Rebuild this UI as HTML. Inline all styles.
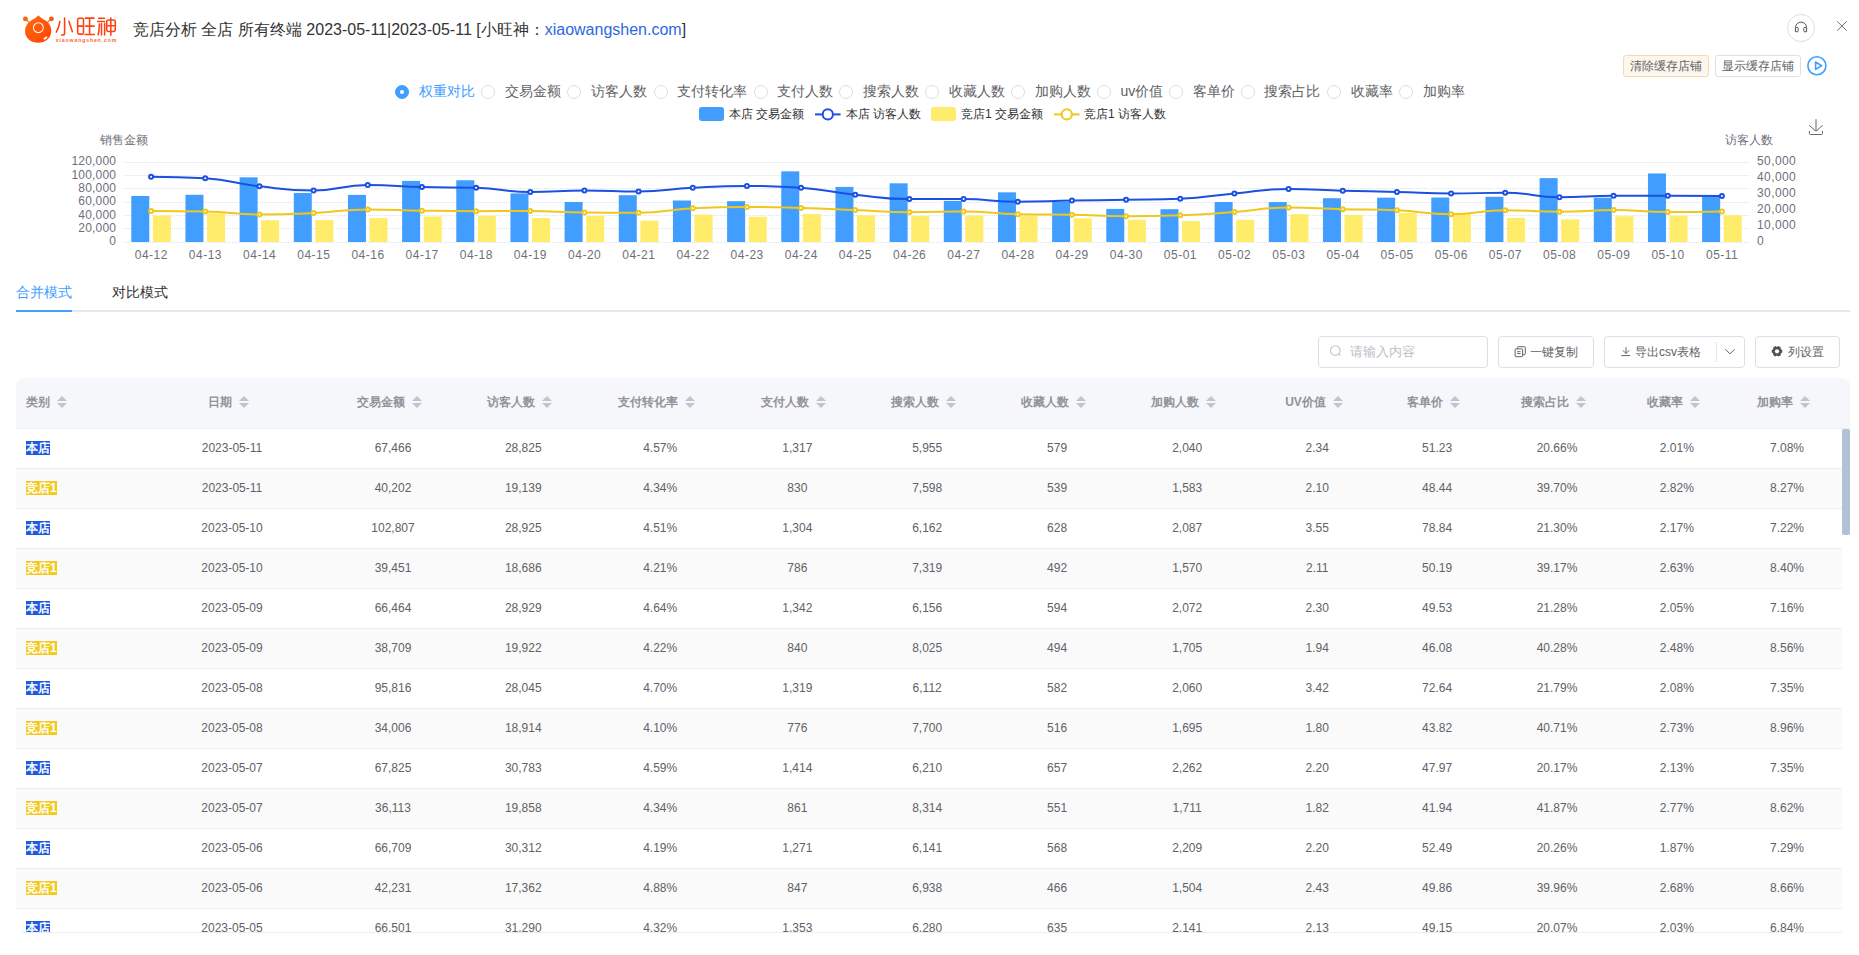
<!DOCTYPE html>
<html><head><meta charset="utf-8">
<style>
*{box-sizing:border-box;margin:0;padding:0}
html,body{width:1859px;height:955px;overflow:hidden;background:#fff}
body{position:relative;font-family:"Liberation Sans",sans-serif;color:#606266}
.abs{position:absolute}
/* header */
.title{position:absolute;left:133px;top:19px;font-size:16px;line-height:22px;color:#333;white-space:nowrap}
.title a{color:#2d68e3;text-decoration:none}
.logo{position:absolute;left:20px;top:12px;width:100px;height:34px}
.btn-s{position:absolute;top:55px;height:22px;font-size:12px;line-height:20px;border:1px solid #dcdfe6;border-radius:3px;background:#fff;color:#606266;text-align:center;white-space:nowrap}
.btn-s.warn{background:#fdf6ec;border-color:#f5dab1}
/* radios */
.rd{position:absolute;top:84px;height:16px;white-space:nowrap;font-size:14px;line-height:16px;color:#606266}
.rd i{position:absolute;left:0;top:1px;width:14px;height:14px;border:1px solid #dcdfe6;border-radius:50%;background:#fff}
.rd.on i{border-color:#409eff;background:#409eff}
.rd.on i:after{content:"";position:absolute;left:4px;top:4px;width:4px;height:4px;border-radius:50%;background:#fff}
.rd span{position:absolute;left:23.5px;top:-1.5px}
.rd.on span{color:#409eff}
/* legend */
.lg{position:absolute;top:106px;font-size:12px;line-height:16px;color:#333;white-space:nowrap}
/* axis */
.yl{position:absolute;left:36px;width:80px;text-align:right;font-size:12px;line-height:14px;color:#6e7079;letter-spacing:0.2px;margin-left:0.2px}
.yr{position:absolute;left:1757px;font-size:12px;line-height:14px;color:#6e7079;letter-spacing:0.4px}
.xl{position:absolute;top:248px;width:60px;text-align:center;font-size:12px;line-height:14px;color:#6e7079;letter-spacing:0.5px;text-indent:0.5px}
.axt{position:absolute;top:133px;font-size:12px;line-height:14px;color:#6e7079}
/* tabs */
.tab{position:absolute;top:283px;font-size:14px;line-height:18px;color:#303133}
.tab.on{color:#409eff}
/* toolbar */
.tb{position:absolute;top:336px;height:32px;border:1px solid #dcdfe6;border-radius:4px;background:#fff;font-size:12px;line-height:30px;color:#606266;white-space:nowrap}
/* table */
.thead{position:absolute;left:16px;top:378px;width:1834px;height:51px;background:#f5f7fa;border-radius:8px 8px 0 0;border-bottom:1px solid #ebeef5}
.th{position:absolute;top:394px;font-size:12px;line-height:16px;font-weight:bold;color:#909399;white-space:nowrap}
.caret{position:absolute;right:0;top:2px;width:24px;height:12px}
.caret:before{content:"";position:absolute;left:7px;top:0;border:5px solid transparent;border-top-width:0;border-bottom:5px solid #c0c4cc}
.caret:after{content:"";position:absolute;left:7px;top:7px;border:5px solid transparent;border-bottom-width:0;border-top:5px solid #c0c4cc}
.th{padding-right:24px}
.tr{position:absolute;left:16px;width:1826px;height:40px;background:#fff;border-bottom:1px solid #ebeef5}
.tr.even{background:#fafafa}
.td0{position:absolute;left:10px;top:12px;font-size:12px;line-height:14px}
.td{position:absolute;top:12px;width:120px;margin-left:-16px;text-align:center;font-size:12px;line-height:14px;color:#606266}
.tag{color:#fff;padding:0;font-weight:bold}
.tag.b{background:#1f5bde}
.tag.y{background:#f3c923}
</style></head>
<body>
<!-- logo -->
<svg class="abs" style="left:0;top:0" width="130" height="50" viewBox="0 0 130 50">
  <defs><linearGradient id="lg1" x1="0" y1="0" x2="1" y2="1"><stop offset="0" stop-color="#ff6a12"/><stop offset="1" stop-color="#ff4500"/></linearGradient></defs>
  <path d="M25.4 18.9 L29.8 22.8 M51.4 18.9 L47 22.8" stroke="#ff5d0c" stroke-width="1.1"/>
  <circle cx="25.4" cy="18.9" r="2.45" fill="#ff650f"/>
  <circle cx="51.4" cy="18.9" r="2.45" fill="#ff5a0a"/>
  <path d="M38.4 15.3 C40.5 18 43 19 45.5 20.5 C49.5 23 51.3 27 51.3 31 C51.3 37.8 45.5 42.8 38.2 42.8 C30.8 42.8 25 37.8 25 31.2 C25 27 27 23.2 30.8 20.8 C33.5 19 36.2 18.2 38.4 15.3 Z" fill="url(#lg1)"/>
  <circle cx="38.4" cy="27.7" r="4.9" fill="none" stroke="#fff" stroke-width="1.05"/>
  <ellipse cx="45.5" cy="38.1" rx="2.2" ry="1.05" transform="rotate(-33 45.3 38.2)" fill="#fff"/>
  <g fill="none" stroke="#ff4010" stroke-width="1.55" stroke-linecap="round" stroke-linejoin="round">
    <path d="M64.6 17.9 V33.2 Q64.6 35 62.8 35 H61.5"/>
    <path d="M59.9 21.6 Q58.8 28 56.3 32.2"/>
    <path d="M68.9 21.2 L72.4 31.7"/>
    <rect x="77.7" y="18.3" width="5.8" height="15.8" rx="1.3"/>
    <path d="M77.7 26.1 H83.5"/>
    <path d="M85.2 18.1 H94 M85.6 26.1 H94.1 M85 34.5 H94.3 M89.6 18.1 V34.5"/>
    <path d="M98.6 18.3 H104.5 M97.6 21.5 H104.6 M99.4 24 Q99.2 31 98.2 34.8 M101.5 23.6 V35 M104.6 23.6 V35"/>
    <rect x="106.7" y="20" width="8.6" height="11.5" rx="2"/>
    <path d="M106.7 25.8 H115.3 M110.8 17.9 V35.3"/>
  </g>
  <text x="55.8" y="42.2" font-size="5.2" font-weight="bold" fill="#ff5a2a" font-family="Liberation Sans" letter-spacing="0.84" opacity="0.95">xiaowangshen.com</text>
</svg>
<div class="title">竞店分析 全店 所有终端 2023-05-11|2023-05-11 [小旺神：<a>xiaowangshen.com</a>]</div>
<!-- headset + close -->
<svg class="abs" style="left:1786px;top:13px" width="30" height="30" viewBox="0 0 30 30">
  <circle cx="15" cy="15" r="13.5" fill="#fff" stroke="#dcdfe6" stroke-width="1"/>
  <path d="M9.4 19 V14.7 A5.6 5.6 0 0 1 20.6 14.7 V19" fill="none" stroke="#4a4a4a" stroke-width="0.9"/>
  <rect x="9.6" y="14.3" width="2.6" height="4.6" rx="1.2" fill="#fff" stroke="#4a4a4a" stroke-width="0.9"/>
  <rect x="17.8" y="14.3" width="2.6" height="4.6" rx="1.2" fill="#fff" stroke="#4a4a4a" stroke-width="0.9"/>
</svg>
<svg class="abs" style="left:1836px;top:20px" width="12" height="12" viewBox="0 0 12 12">
  <path d="M1.1 1.3 L10.8 10.7 M10.8 1.3 L1.1 10.7" stroke="#6a6a6a" stroke-width="0.95"/>
</svg>
<div class="btn-s warn" style="left:1623px;width:86px">清除缓存店铺</div>
<div class="btn-s" style="left:1715px;width:86px">显示缓存店铺</div>
<svg class="abs" style="left:1806px;top:55px" width="22" height="22" viewBox="0 0 22 22">
  <circle cx="10.9" cy="10.7" r="9" fill="none" stroke="#409eff" stroke-width="1.6"/>
  <path d="M9.6 7 L15.6 10.7 L9.6 14.4 Z" fill="none" stroke="#409eff" stroke-width="1.6" stroke-linejoin="round"/>
</svg>
<!-- radios -->
<div class="rd on" style="left:395.0px"><i></i><span>权重对比</span></div>
<div class="rd" style="left:481.0px"><i></i><span>交易金额</span></div>
<div class="rd" style="left:567.0px"><i></i><span>访客人数</span></div>
<div class="rd" style="left:653.5px"><i></i><span>支付转化率</span></div>
<div class="rd" style="left:753.5px"><i></i><span>支付人数</span></div>
<div class="rd" style="left:839.3px"><i></i><span>搜索人数</span></div>
<div class="rd" style="left:925.4px"><i></i><span>收藏人数</span></div>
<div class="rd" style="left:1011.0px"><i></i><span>加购人数</span></div>
<div class="rd" style="left:1097.0px"><i></i><span>uv价值</span></div>
<div class="rd" style="left:1169.4px"><i></i><span>客单价</span></div>
<div class="rd" style="left:1240.8px"><i></i><span>搜索占比</span></div>
<div class="rd" style="left:1327.2px"><i></i><span>收藏率</span></div>
<div class="rd" style="left:1399.0px"><i></i><span>加购率</span></div>
<!-- legend -->
<div class="abs" style="left:699px;top:107px;width:25px;height:14px;border-radius:3px;background:#419efe"></div>
<div class="lg" style="left:729px">本店 交易金额</div>
<svg class="abs" style="left:815px;top:107px" width="27" height="15" viewBox="0 0 27 15">
  <path d="M0 7.4 H25.6" stroke="#1c50df" stroke-width="2"/><circle cx="12.8" cy="7.4" r="5.1" fill="#fff" stroke="#1c50df" stroke-width="2"/>
</svg>
<div class="lg" style="left:846px">本店 访客人数</div>
<div class="abs" style="left:931px;top:107px;width:25px;height:14px;border-radius:3px;background:#ffec6a"></div>
<div class="lg" style="left:961px">竞店1 交易金额</div>
<svg class="abs" style="left:1054px;top:107px" width="27" height="15" viewBox="0 0 27 15">
  <path d="M0 7.4 H25.6" stroke="#f0c81c" stroke-width="2"/><circle cx="12.8" cy="7.4" r="5.1" fill="#fff" stroke="#f0c81c" stroke-width="2"/>
</svg>
<div class="lg" style="left:1084px">竞店1 访客人数</div>
<!-- axis titles -->
<div class="axt" style="left:100px">销售金额</div>
<div class="axt" style="left:1725px">访客人数</div>
<svg class="abs" style="left:1807px;top:118px" width="18" height="18" viewBox="0 0 18 18">
  <path d="M9 1.2 V13 M2.3 7.4 L9 13.2 L15.6 7.4 M2.4 12.9 V15.5 Q2.4 16.5 3.4 16.5 H14.6 Q15.5 16.5 15.5 15.5 V12.9" fill="none" stroke="#666" stroke-width="1"/>
</svg>
<svg width="1859" height="955" style="position:absolute;left:0;top:0">
<line x1="124.0" y1="242.5" x2="1749.0" y2="242.5" stroke="#dde3ee" stroke-width="1" stroke-dasharray="1 1"/>
<line x1="124.0" y1="228.5" x2="1749.0" y2="228.5" stroke="#dde3ee" stroke-width="1" stroke-dasharray="1 1"/>
<line x1="124.0" y1="215.5" x2="1749.0" y2="215.5" stroke="#dde3ee" stroke-width="1" stroke-dasharray="1 1"/>
<line x1="124.0" y1="202.5" x2="1749.0" y2="202.5" stroke="#dde3ee" stroke-width="1" stroke-dasharray="1 1"/>
<line x1="124.0" y1="188.5" x2="1749.0" y2="188.5" stroke="#dde3ee" stroke-width="1" stroke-dasharray="1 1"/>
<line x1="124.0" y1="175.5" x2="1749.0" y2="175.5" stroke="#dde3ee" stroke-width="1" stroke-dasharray="1 1"/>
<line x1="124.0" y1="162.5" x2="1749.0" y2="162.5" stroke="#dde3ee" stroke-width="1" stroke-dasharray="1 1"/>
<rect x="131.28" y="196.00" width="18" height="46.00" fill="#419efe"/>
<rect x="152.88" y="215.50" width="18" height="26.50" fill="#ffec6a"/>
<rect x="185.45" y="194.80" width="18" height="47.20" fill="#419efe"/>
<rect x="207.05" y="213.40" width="18" height="28.60" fill="#ffec6a"/>
<rect x="239.62" y="177.33" width="18" height="64.67" fill="#419efe"/>
<rect x="261.22" y="220.20" width="18" height="21.80" fill="#ffec6a"/>
<rect x="293.78" y="193.00" width="18" height="49.00" fill="#419efe"/>
<rect x="315.38" y="220.07" width="18" height="21.93" fill="#ffec6a"/>
<rect x="347.95" y="194.90" width="18" height="47.10" fill="#419efe"/>
<rect x="369.55" y="218.10" width="18" height="23.90" fill="#ffec6a"/>
<rect x="402.12" y="180.90" width="18" height="61.10" fill="#419efe"/>
<rect x="423.72" y="216.50" width="18" height="25.50" fill="#ffec6a"/>
<rect x="456.28" y="180.27" width="18" height="61.73" fill="#419efe"/>
<rect x="477.88" y="215.73" width="18" height="26.27" fill="#ffec6a"/>
<rect x="510.45" y="193.40" width="18" height="48.60" fill="#419efe"/>
<rect x="532.05" y="218.00" width="18" height="24.00" fill="#ffec6a"/>
<rect x="564.62" y="202.00" width="18" height="40.00" fill="#419efe"/>
<rect x="586.22" y="216.00" width="18" height="26.00" fill="#ffec6a"/>
<rect x="618.78" y="195.20" width="18" height="46.80" fill="#419efe"/>
<rect x="640.38" y="220.67" width="18" height="21.33" fill="#ffec6a"/>
<rect x="672.95" y="200.50" width="18" height="41.50" fill="#419efe"/>
<rect x="694.55" y="214.50" width="18" height="27.50" fill="#ffec6a"/>
<rect x="727.12" y="201.20" width="18" height="40.80" fill="#419efe"/>
<rect x="748.72" y="216.80" width="18" height="25.20" fill="#ffec6a"/>
<rect x="781.28" y="171.33" width="18" height="70.67" fill="#419efe"/>
<rect x="802.88" y="214.00" width="18" height="28.00" fill="#ffec6a"/>
<rect x="835.45" y="186.90" width="18" height="55.10" fill="#419efe"/>
<rect x="857.05" y="215.27" width="18" height="26.73" fill="#ffec6a"/>
<rect x="889.62" y="183.30" width="18" height="58.70" fill="#419efe"/>
<rect x="911.22" y="216.00" width="18" height="26.00" fill="#ffec6a"/>
<rect x="943.78" y="200.90" width="18" height="41.10" fill="#419efe"/>
<rect x="965.38" y="215.53" width="18" height="26.47" fill="#ffec6a"/>
<rect x="997.95" y="192.33" width="18" height="49.67" fill="#419efe"/>
<rect x="1019.55" y="215.70" width="18" height="26.30" fill="#ffec6a"/>
<rect x="1052.12" y="201.70" width="18" height="40.30" fill="#419efe"/>
<rect x="1073.72" y="218.27" width="18" height="23.73" fill="#ffec6a"/>
<rect x="1106.28" y="208.90" width="18" height="33.10" fill="#419efe"/>
<rect x="1127.88" y="219.80" width="18" height="22.20" fill="#ffec6a"/>
<rect x="1160.45" y="209.20" width="18" height="32.80" fill="#419efe"/>
<rect x="1182.05" y="221.00" width="18" height="21.00" fill="#ffec6a"/>
<rect x="1214.62" y="202.00" width="18" height="40.00" fill="#419efe"/>
<rect x="1236.22" y="219.80" width="18" height="22.20" fill="#ffec6a"/>
<rect x="1268.78" y="202.10" width="18" height="39.90" fill="#419efe"/>
<rect x="1290.38" y="214.20" width="18" height="27.80" fill="#ffec6a"/>
<rect x="1322.95" y="198.20" width="18" height="43.80" fill="#419efe"/>
<rect x="1344.55" y="214.80" width="18" height="27.20" fill="#ffec6a"/>
<rect x="1377.12" y="197.67" width="18" height="44.33" fill="#419efe"/>
<rect x="1398.72" y="213.00" width="18" height="29.00" fill="#ffec6a"/>
<rect x="1431.28" y="197.53" width="18" height="44.47" fill="#419efe"/>
<rect x="1452.88" y="213.85" width="18" height="28.15" fill="#ffec6a"/>
<rect x="1485.45" y="196.78" width="18" height="45.22" fill="#419efe"/>
<rect x="1507.05" y="217.92" width="18" height="24.08" fill="#ffec6a"/>
<rect x="1539.62" y="178.12" width="18" height="63.88" fill="#419efe"/>
<rect x="1561.22" y="219.33" width="18" height="22.67" fill="#ffec6a"/>
<rect x="1593.78" y="197.69" width="18" height="44.31" fill="#419efe"/>
<rect x="1615.38" y="216.19" width="18" height="25.81" fill="#ffec6a"/>
<rect x="1647.95" y="173.46" width="18" height="68.54" fill="#419efe"/>
<rect x="1669.55" y="215.70" width="18" height="26.30" fill="#ffec6a"/>
<rect x="1702.12" y="197.02" width="18" height="44.98" fill="#419efe"/>
<rect x="1723.72" y="215.20" width="18" height="26.80" fill="#ffec6a"/>
<path d="M151.08 210.96 C151.08 210.96 178.19 210.96 205.25 211.44 C232.35 211.92 232.32 214.48 259.42 214.48 C286.48 214.48 286.52 214.28 313.58 213.04 C340.69 211.80 340.64 209.52 367.75 209.52 C394.81 209.52 394.83 210.28 421.92 210.70 C449.00 211.12 449.00 211.20 476.08 211.20 C503.17 211.20 503.17 210.96 530.25 210.96 C557.34 210.96 557.33 212.27 584.42 212.50 C611.49 212.72 611.55 212.72 638.58 212.72 C665.71 212.72 665.62 209.48 692.75 208.24 C719.79 207.01 719.83 207.01 746.92 207.01 C774.00 207.01 774.01 207.25 801.08 208.00 C828.17 208.75 828.17 208.94 855.25 210.00 C882.34 211.06 882.32 212.24 909.42 212.24 C936.49 212.24 936.52 211.50 963.58 211.50 C990.68 211.50 990.65 213.52 1017.75 214.16 C1044.82 214.80 1044.84 214.26 1071.92 214.80 C1099.00 215.34 1099.00 216.30 1126.08 216.30 C1153.16 216.30 1153.19 216.30 1180.25 215.28 C1207.36 214.25 1207.35 213.88 1234.42 211.92 C1261.52 209.96 1261.46 207.44 1288.58 207.44 C1315.63 207.44 1315.66 208.48 1342.75 209.20 C1369.83 209.92 1369.87 209.20 1396.92 210.32 C1424.03 211.44 1424.00 214.22 1451.08 214.22 C1478.17 214.22 1478.14 210.23 1505.25 210.23 C1532.30 210.23 1532.33 211.74 1559.42 211.74 C1586.50 211.74 1586.50 210.12 1613.58 210.12 C1640.67 210.12 1640.66 212.10 1667.75 212.10 C1694.83 212.10 1721.92 211.38 1721.92 211.38" fill="none" stroke="#f0c81c" stroke-width="2"/>
<circle cx="151.08" cy="210.96" r="2" fill="#fff" stroke="#f0c81c" stroke-width="2"/>
<circle cx="205.25" cy="211.44" r="2" fill="#fff" stroke="#f0c81c" stroke-width="2"/>
<circle cx="259.42" cy="214.48" r="2" fill="#fff" stroke="#f0c81c" stroke-width="2"/>
<circle cx="313.58" cy="213.04" r="2" fill="#fff" stroke="#f0c81c" stroke-width="2"/>
<circle cx="367.75" cy="209.52" r="2" fill="#fff" stroke="#f0c81c" stroke-width="2"/>
<circle cx="421.92" cy="210.70" r="2" fill="#fff" stroke="#f0c81c" stroke-width="2"/>
<circle cx="476.08" cy="211.20" r="2" fill="#fff" stroke="#f0c81c" stroke-width="2"/>
<circle cx="530.25" cy="210.96" r="2" fill="#fff" stroke="#f0c81c" stroke-width="2"/>
<circle cx="584.42" cy="212.50" r="2" fill="#fff" stroke="#f0c81c" stroke-width="2"/>
<circle cx="638.58" cy="212.72" r="2" fill="#fff" stroke="#f0c81c" stroke-width="2"/>
<circle cx="692.75" cy="208.24" r="2" fill="#fff" stroke="#f0c81c" stroke-width="2"/>
<circle cx="746.92" cy="207.01" r="2" fill="#fff" stroke="#f0c81c" stroke-width="2"/>
<circle cx="801.08" cy="208.00" r="2" fill="#fff" stroke="#f0c81c" stroke-width="2"/>
<circle cx="855.25" cy="210.00" r="2" fill="#fff" stroke="#f0c81c" stroke-width="2"/>
<circle cx="909.42" cy="212.24" r="2" fill="#fff" stroke="#f0c81c" stroke-width="2"/>
<circle cx="963.58" cy="211.50" r="2" fill="#fff" stroke="#f0c81c" stroke-width="2"/>
<circle cx="1017.75" cy="214.16" r="2" fill="#fff" stroke="#f0c81c" stroke-width="2"/>
<circle cx="1071.92" cy="214.80" r="2" fill="#fff" stroke="#f0c81c" stroke-width="2"/>
<circle cx="1126.08" cy="216.30" r="2" fill="#fff" stroke="#f0c81c" stroke-width="2"/>
<circle cx="1180.25" cy="215.28" r="2" fill="#fff" stroke="#f0c81c" stroke-width="2"/>
<circle cx="1234.42" cy="211.92" r="2" fill="#fff" stroke="#f0c81c" stroke-width="2"/>
<circle cx="1288.58" cy="207.44" r="2" fill="#fff" stroke="#f0c81c" stroke-width="2"/>
<circle cx="1342.75" cy="209.20" r="2" fill="#fff" stroke="#f0c81c" stroke-width="2"/>
<circle cx="1396.92" cy="210.32" r="2" fill="#fff" stroke="#f0c81c" stroke-width="2"/>
<circle cx="1451.08" cy="214.22" r="2" fill="#fff" stroke="#f0c81c" stroke-width="2"/>
<circle cx="1505.25" cy="210.23" r="2" fill="#fff" stroke="#f0c81c" stroke-width="2"/>
<circle cx="1559.42" cy="211.74" r="2" fill="#fff" stroke="#f0c81c" stroke-width="2"/>
<circle cx="1613.58" cy="210.12" r="2" fill="#fff" stroke="#f0c81c" stroke-width="2"/>
<circle cx="1667.75" cy="212.10" r="2" fill="#fff" stroke="#f0c81c" stroke-width="2"/>
<circle cx="1721.92" cy="211.38" r="2" fill="#fff" stroke="#f0c81c" stroke-width="2"/>
<path d="M151.08 176.80 C151.08 176.80 178.31 176.80 205.25 178.32 C232.47 179.86 232.23 183.27 259.42 186.32 C286.39 189.35 286.53 190.48 313.58 190.48 C340.69 190.48 340.61 185.10 367.75 185.10 C394.78 185.10 394.83 186.44 421.92 187.12 C448.99 187.80 449.04 187.12 476.08 187.81 C503.20 188.50 503.13 191.92 530.25 191.92 C557.30 191.92 557.33 190.40 584.42 190.40 C611.50 190.40 611.53 191.50 638.58 191.50 C665.70 191.50 665.64 189.10 692.75 187.70 C719.81 186.30 719.83 185.90 746.92 185.90 C774.00 185.90 774.10 185.90 801.08 187.81 C828.27 189.73 828.11 191.81 855.25 194.64 C882.27 197.46 882.29 199.12 909.42 199.12 C936.45 199.12 936.52 199.12 963.58 199.12 C990.68 199.12 990.65 201.68 1017.75 201.68 C1044.82 201.68 1044.83 201.10 1071.92 200.61 C1099.00 200.11 1099.00 200.17 1126.08 199.70 C1153.17 199.22 1153.23 199.70 1180.25 198.70 C1207.40 197.71 1207.32 195.87 1234.42 193.41 C1261.48 190.95 1261.46 188.88 1288.58 188.88 C1315.63 188.88 1315.66 189.92 1342.75 190.69 C1369.83 191.45 1369.84 191.23 1396.92 191.94 C1424.00 192.64 1424.00 193.50 1451.08 193.50 C1478.16 193.50 1478.21 192.75 1505.25 192.75 C1532.38 192.75 1532.29 197.13 1559.42 197.13 C1586.46 197.13 1586.50 195.71 1613.58 195.71 C1640.66 195.71 1640.67 195.71 1667.75 195.72 C1694.83 195.73 1721.92 195.88 1721.92 195.88" fill="none" stroke="#1c50df" stroke-width="2"/>
<circle cx="151.08" cy="176.80" r="2" fill="#fff" stroke="#1c50df" stroke-width="2"/>
<circle cx="205.25" cy="178.32" r="2" fill="#fff" stroke="#1c50df" stroke-width="2"/>
<circle cx="259.42" cy="186.32" r="2" fill="#fff" stroke="#1c50df" stroke-width="2"/>
<circle cx="313.58" cy="190.48" r="2" fill="#fff" stroke="#1c50df" stroke-width="2"/>
<circle cx="367.75" cy="185.10" r="2" fill="#fff" stroke="#1c50df" stroke-width="2"/>
<circle cx="421.92" cy="187.12" r="2" fill="#fff" stroke="#1c50df" stroke-width="2"/>
<circle cx="476.08" cy="187.81" r="2" fill="#fff" stroke="#1c50df" stroke-width="2"/>
<circle cx="530.25" cy="191.92" r="2" fill="#fff" stroke="#1c50df" stroke-width="2"/>
<circle cx="584.42" cy="190.40" r="2" fill="#fff" stroke="#1c50df" stroke-width="2"/>
<circle cx="638.58" cy="191.50" r="2" fill="#fff" stroke="#1c50df" stroke-width="2"/>
<circle cx="692.75" cy="187.70" r="2" fill="#fff" stroke="#1c50df" stroke-width="2"/>
<circle cx="746.92" cy="185.90" r="2" fill="#fff" stroke="#1c50df" stroke-width="2"/>
<circle cx="801.08" cy="187.81" r="2" fill="#fff" stroke="#1c50df" stroke-width="2"/>
<circle cx="855.25" cy="194.64" r="2" fill="#fff" stroke="#1c50df" stroke-width="2"/>
<circle cx="909.42" cy="199.12" r="2" fill="#fff" stroke="#1c50df" stroke-width="2"/>
<circle cx="963.58" cy="199.12" r="2" fill="#fff" stroke="#1c50df" stroke-width="2"/>
<circle cx="1017.75" cy="201.68" r="2" fill="#fff" stroke="#1c50df" stroke-width="2"/>
<circle cx="1071.92" cy="200.61" r="2" fill="#fff" stroke="#1c50df" stroke-width="2"/>
<circle cx="1126.08" cy="199.70" r="2" fill="#fff" stroke="#1c50df" stroke-width="2"/>
<circle cx="1180.25" cy="198.70" r="2" fill="#fff" stroke="#1c50df" stroke-width="2"/>
<circle cx="1234.42" cy="193.41" r="2" fill="#fff" stroke="#1c50df" stroke-width="2"/>
<circle cx="1288.58" cy="188.88" r="2" fill="#fff" stroke="#1c50df" stroke-width="2"/>
<circle cx="1342.75" cy="190.69" r="2" fill="#fff" stroke="#1c50df" stroke-width="2"/>
<circle cx="1396.92" cy="191.94" r="2" fill="#fff" stroke="#1c50df" stroke-width="2"/>
<circle cx="1451.08" cy="193.50" r="2" fill="#fff" stroke="#1c50df" stroke-width="2"/>
<circle cx="1505.25" cy="192.75" r="2" fill="#fff" stroke="#1c50df" stroke-width="2"/>
<circle cx="1559.42" cy="197.13" r="2" fill="#fff" stroke="#1c50df" stroke-width="2"/>
<circle cx="1613.58" cy="195.71" r="2" fill="#fff" stroke="#1c50df" stroke-width="2"/>
<circle cx="1667.75" cy="195.72" r="2" fill="#fff" stroke="#1c50df" stroke-width="2"/>
<circle cx="1721.92" cy="195.88" r="2" fill="#fff" stroke="#1c50df" stroke-width="2"/>
</svg>
<div class="yl" style="top:234.4px">0</div>
<div class="yl" style="top:221.1px">20,000</div>
<div class="yl" style="top:207.7px">40,000</div>
<div class="yl" style="top:194.4px">60,000</div>
<div class="yl" style="top:181.1px">80,000</div>
<div class="yl" style="top:167.7px">100,000</div>
<div class="yl" style="top:154.4px">120,000</div>
<div class="yr" style="top:234.0px">0</div>
<div class="yr" style="top:218.0px">10,000</div>
<div class="yr" style="top:202.0px">20,000</div>
<div class="yr" style="top:186.0px">30,000</div>
<div class="yr" style="top:170.0px">40,000</div>
<div class="yr" style="top:154.0px">50,000</div>
<div class="xl" style="left:121.1px">04-12</div>
<div class="xl" style="left:175.2px">04-13</div>
<div class="xl" style="left:229.4px">04-14</div>
<div class="xl" style="left:283.6px">04-15</div>
<div class="xl" style="left:337.8px">04-16</div>
<div class="xl" style="left:391.9px">04-17</div>
<div class="xl" style="left:446.1px">04-18</div>
<div class="xl" style="left:500.2px">04-19</div>
<div class="xl" style="left:554.4px">04-20</div>
<div class="xl" style="left:608.6px">04-21</div>
<div class="xl" style="left:662.8px">04-22</div>
<div class="xl" style="left:716.9px">04-23</div>
<div class="xl" style="left:771.1px">04-24</div>
<div class="xl" style="left:825.2px">04-25</div>
<div class="xl" style="left:879.4px">04-26</div>
<div class="xl" style="left:933.6px">04-27</div>
<div class="xl" style="left:987.8px">04-28</div>
<div class="xl" style="left:1041.9px">04-29</div>
<div class="xl" style="left:1096.1px">04-30</div>
<div class="xl" style="left:1150.2px">05-01</div>
<div class="xl" style="left:1204.4px">05-02</div>
<div class="xl" style="left:1258.6px">05-03</div>
<div class="xl" style="left:1312.8px">05-04</div>
<div class="xl" style="left:1366.9px">05-05</div>
<div class="xl" style="left:1421.1px">05-06</div>
<div class="xl" style="left:1475.2px">05-07</div>
<div class="xl" style="left:1529.4px">05-08</div>
<div class="xl" style="left:1583.6px">05-09</div>
<div class="xl" style="left:1637.8px">05-10</div>
<div class="xl" style="left:1691.9px">05-11</div>
<!-- tabs -->
<div class="tab on" style="left:16px">合并模式</div>
<div class="tab" style="left:112px">对比模式</div>
<div class="abs" style="left:16px;top:310px;width:1834px;height:2px;background:#e4e7ed"></div>
<div class="abs" style="left:16px;top:310px;width:56px;height:2px;background:#409eff"></div>
<!-- toolbar -->
<div class="tb" style="left:1318px;width:170px;color:#bcc0c8;font-size:13px;line-height:29px;padding-left:31px">请输入内容
  <svg class="abs" style="left:10px;top:8px" width="14" height="14" viewBox="0 0 14 14"><circle cx="6.3" cy="5.5" r="4.8" fill="none" stroke="#c0c4cc" stroke-width="1.1"/><path d="M9.7 8.9 L11.4 10.6" stroke="#c0c4cc" stroke-width="1.1"/></svg>
</div>
<div class="tb" style="left:1498px;width:96px;padding-left:31px">一键复制
  <svg class="abs" style="left:15px;top:9px" width="13" height="13" viewBox="0 0 13 13"><g fill="none" stroke="#606266" stroke-width="1"><rect x="1.1" y="2.9" width="7.5" height="7.8" rx="0.8"/><path d="M3.4 2.9 V1.6 Q3.4 0.7 4.3 0.7 H10.4 Q11.3 0.7 11.3 1.6 V7.7 Q11.3 8.6 10.4 8.6 H8.6"/><path d="M3.2 5.7 H6.6 M3.2 7.6 H6.6"/></g></svg>
</div>
<div class="tb" style="left:1604px;width:141px;padding-left:30px">导出csv表格
  <svg class="abs" style="left:15px;top:9px" width="12" height="12" viewBox="0 0 12 12"><path d="M6 1.2 V7.4 M2.8 4.3 L6 7.5 L9.2 4.3 M1.3 9.6 H10.2" fill="none" stroke="#606266" stroke-width="1"/></svg>
  <div class="abs" style="left:111px;top:5px;width:1px;height:20px;background:#e4e7ed"></div>
  <svg class="abs" style="left:120px;top:10px" width="11" height="10" viewBox="0 0 11 10"><path d="M0.4 2.2 L5 6.9 L9.6 2.2" fill="none" stroke="#606266" stroke-width="1"/></svg>
</div>
<div class="tb" style="left:1755px;width:85px;padding-left:32px">列设置
  <svg class="abs" style="left:15px;top:9px" width="12" height="12" viewBox="0 0 12 12"><path d="M11.24 3.99 L11.24 6.61 L9.72 7.45 L9.75 9.18 L7.49 10.49 L6.00 9.60 L4.51 10.49 L2.25 9.18 L2.28 7.45 L0.76 6.61 L0.76 3.99 L2.28 3.15 L2.25 1.42 L4.51 0.11 L6.00 1.00 L7.49 0.11 L9.75 1.42 L9.72 3.15 Z" fill="#505050"/><circle cx="6" cy="5.3" r="2.1" fill="#fff"/></svg>
</div>
<!-- table -->
<div class="thead"></div>
<div class="th" style="left:26px">类别<b class="caret"></b></div>
<div class="th" style="left:208.0px">日期<b class="caret"></b></div>
<div class="th" style="left:357.0px">交易金额<b class="caret"></b></div>
<div class="th" style="left:487.3px">访客人数<b class="caret"></b></div>
<div class="th" style="left:618.2px">支付转化率<b class="caret"></b></div>
<div class="th" style="left:761.3px">支付人数<b class="caret"></b></div>
<div class="th" style="left:891.2px">搜索人数<b class="caret"></b></div>
<div class="th" style="left:1021.1px">收藏人数<b class="caret"></b></div>
<div class="th" style="left:1151.2px">加购人数<b class="caret"></b></div>
<div class="th" style="left:1285.2px">UV价值<b class="caret"></b></div>
<div class="th" style="left:1407.1px">客单价<b class="caret"></b></div>
<div class="th" style="left:1521.0px">搜索占比<b class="caret"></b></div>
<div class="th" style="left:1646.8px">收藏率<b class="caret"></b></div>
<div class="th" style="left:1757.0px">加购率<b class="caret"></b></div>
<div class="abs" style="left:0;top:429px;width:1859px;height:503px;overflow:hidden">
<div class="abs" style="left:0;top:-429px;width:1859px;height:1200px">
<div class="tr" style="top:428.5px"><div class="td0"><span class="tag b">本店</span></div><div class="td" style="left:172.0px">2023-05-11</div><div class="td" style="left:333.0px">67,466</div><div class="td" style="left:463.3px">28,825</div><div class="td" style="left:600.2px">4.57%</div><div class="td" style="left:737.3px">1,317</div><div class="td" style="left:867.2px">5,955</div><div class="td" style="left:997.1px">579</div><div class="td" style="left:1127.2px">2,040</div><div class="td" style="left:1257.2px">2.34</div><div class="td" style="left:1377.1px">51.23</div><div class="td" style="left:1497.0px">20.66%</div><div class="td" style="left:1616.8px">2.01%</div><div class="td" style="left:1727.0px">7.08%</div></div>
<div class="tr even" style="top:468.5px"><div class="td0"><span class="tag y">竞店1</span></div><div class="td" style="left:172.0px">2023-05-11</div><div class="td" style="left:333.0px">40,202</div><div class="td" style="left:463.3px">19,139</div><div class="td" style="left:600.2px">4.34%</div><div class="td" style="left:737.3px">830</div><div class="td" style="left:867.2px">7,598</div><div class="td" style="left:997.1px">539</div><div class="td" style="left:1127.2px">1,583</div><div class="td" style="left:1257.2px">2.10</div><div class="td" style="left:1377.1px">48.44</div><div class="td" style="left:1497.0px">39.70%</div><div class="td" style="left:1616.8px">2.82%</div><div class="td" style="left:1727.0px">8.27%</div></div>
<div class="tr" style="top:508.5px"><div class="td0"><span class="tag b">本店</span></div><div class="td" style="left:172.0px">2023-05-10</div><div class="td" style="left:333.0px">102,807</div><div class="td" style="left:463.3px">28,925</div><div class="td" style="left:600.2px">4.51%</div><div class="td" style="left:737.3px">1,304</div><div class="td" style="left:867.2px">6,162</div><div class="td" style="left:997.1px">628</div><div class="td" style="left:1127.2px">2,087</div><div class="td" style="left:1257.2px">3.55</div><div class="td" style="left:1377.1px">78.84</div><div class="td" style="left:1497.0px">21.30%</div><div class="td" style="left:1616.8px">2.17%</div><div class="td" style="left:1727.0px">7.22%</div></div>
<div class="tr even" style="top:548.5px"><div class="td0"><span class="tag y">竞店1</span></div><div class="td" style="left:172.0px">2023-05-10</div><div class="td" style="left:333.0px">39,451</div><div class="td" style="left:463.3px">18,686</div><div class="td" style="left:600.2px">4.21%</div><div class="td" style="left:737.3px">786</div><div class="td" style="left:867.2px">7,319</div><div class="td" style="left:997.1px">492</div><div class="td" style="left:1127.2px">1,570</div><div class="td" style="left:1257.2px">2.11</div><div class="td" style="left:1377.1px">50.19</div><div class="td" style="left:1497.0px">39.17%</div><div class="td" style="left:1616.8px">2.63%</div><div class="td" style="left:1727.0px">8.40%</div></div>
<div class="tr" style="top:588.5px"><div class="td0"><span class="tag b">本店</span></div><div class="td" style="left:172.0px">2023-05-09</div><div class="td" style="left:333.0px">66,464</div><div class="td" style="left:463.3px">28,929</div><div class="td" style="left:600.2px">4.64%</div><div class="td" style="left:737.3px">1,342</div><div class="td" style="left:867.2px">6,156</div><div class="td" style="left:997.1px">594</div><div class="td" style="left:1127.2px">2,072</div><div class="td" style="left:1257.2px">2.30</div><div class="td" style="left:1377.1px">49.53</div><div class="td" style="left:1497.0px">21.28%</div><div class="td" style="left:1616.8px">2.05%</div><div class="td" style="left:1727.0px">7.16%</div></div>
<div class="tr even" style="top:628.5px"><div class="td0"><span class="tag y">竞店1</span></div><div class="td" style="left:172.0px">2023-05-09</div><div class="td" style="left:333.0px">38,709</div><div class="td" style="left:463.3px">19,922</div><div class="td" style="left:600.2px">4.22%</div><div class="td" style="left:737.3px">840</div><div class="td" style="left:867.2px">8,025</div><div class="td" style="left:997.1px">494</div><div class="td" style="left:1127.2px">1,705</div><div class="td" style="left:1257.2px">1.94</div><div class="td" style="left:1377.1px">46.08</div><div class="td" style="left:1497.0px">40.28%</div><div class="td" style="left:1616.8px">2.48%</div><div class="td" style="left:1727.0px">8.56%</div></div>
<div class="tr" style="top:668.5px"><div class="td0"><span class="tag b">本店</span></div><div class="td" style="left:172.0px">2023-05-08</div><div class="td" style="left:333.0px">95,816</div><div class="td" style="left:463.3px">28,045</div><div class="td" style="left:600.2px">4.70%</div><div class="td" style="left:737.3px">1,319</div><div class="td" style="left:867.2px">6,112</div><div class="td" style="left:997.1px">582</div><div class="td" style="left:1127.2px">2,060</div><div class="td" style="left:1257.2px">3.42</div><div class="td" style="left:1377.1px">72.64</div><div class="td" style="left:1497.0px">21.79%</div><div class="td" style="left:1616.8px">2.08%</div><div class="td" style="left:1727.0px">7.35%</div></div>
<div class="tr even" style="top:708.5px"><div class="td0"><span class="tag y">竞店1</span></div><div class="td" style="left:172.0px">2023-05-08</div><div class="td" style="left:333.0px">34,006</div><div class="td" style="left:463.3px">18,914</div><div class="td" style="left:600.2px">4.10%</div><div class="td" style="left:737.3px">776</div><div class="td" style="left:867.2px">7,700</div><div class="td" style="left:997.1px">516</div><div class="td" style="left:1127.2px">1,695</div><div class="td" style="left:1257.2px">1.80</div><div class="td" style="left:1377.1px">43.82</div><div class="td" style="left:1497.0px">40.71%</div><div class="td" style="left:1616.8px">2.73%</div><div class="td" style="left:1727.0px">8.96%</div></div>
<div class="tr" style="top:748.5px"><div class="td0"><span class="tag b">本店</span></div><div class="td" style="left:172.0px">2023-05-07</div><div class="td" style="left:333.0px">67,825</div><div class="td" style="left:463.3px">30,783</div><div class="td" style="left:600.2px">4.59%</div><div class="td" style="left:737.3px">1,414</div><div class="td" style="left:867.2px">6,210</div><div class="td" style="left:997.1px">657</div><div class="td" style="left:1127.2px">2,262</div><div class="td" style="left:1257.2px">2.20</div><div class="td" style="left:1377.1px">47.97</div><div class="td" style="left:1497.0px">20.17%</div><div class="td" style="left:1616.8px">2.13%</div><div class="td" style="left:1727.0px">7.35%</div></div>
<div class="tr even" style="top:788.5px"><div class="td0"><span class="tag y">竞店1</span></div><div class="td" style="left:172.0px">2023-05-07</div><div class="td" style="left:333.0px">36,113</div><div class="td" style="left:463.3px">19,858</div><div class="td" style="left:600.2px">4.34%</div><div class="td" style="left:737.3px">861</div><div class="td" style="left:867.2px">8,314</div><div class="td" style="left:997.1px">551</div><div class="td" style="left:1127.2px">1,711</div><div class="td" style="left:1257.2px">1.82</div><div class="td" style="left:1377.1px">41.94</div><div class="td" style="left:1497.0px">41.87%</div><div class="td" style="left:1616.8px">2.77%</div><div class="td" style="left:1727.0px">8.62%</div></div>
<div class="tr" style="top:828.5px"><div class="td0"><span class="tag b">本店</span></div><div class="td" style="left:172.0px">2023-05-06</div><div class="td" style="left:333.0px">66,709</div><div class="td" style="left:463.3px">30,312</div><div class="td" style="left:600.2px">4.19%</div><div class="td" style="left:737.3px">1,271</div><div class="td" style="left:867.2px">6,141</div><div class="td" style="left:997.1px">568</div><div class="td" style="left:1127.2px">2,209</div><div class="td" style="left:1257.2px">2.20</div><div class="td" style="left:1377.1px">52.49</div><div class="td" style="left:1497.0px">20.26%</div><div class="td" style="left:1616.8px">1.87%</div><div class="td" style="left:1727.0px">7.29%</div></div>
<div class="tr even" style="top:868.5px"><div class="td0"><span class="tag y">竞店1</span></div><div class="td" style="left:172.0px">2023-05-06</div><div class="td" style="left:333.0px">42,231</div><div class="td" style="left:463.3px">17,362</div><div class="td" style="left:600.2px">4.88%</div><div class="td" style="left:737.3px">847</div><div class="td" style="left:867.2px">6,938</div><div class="td" style="left:997.1px">466</div><div class="td" style="left:1127.2px">1,504</div><div class="td" style="left:1257.2px">2.43</div><div class="td" style="left:1377.1px">49.86</div><div class="td" style="left:1497.0px">39.96%</div><div class="td" style="left:1616.8px">2.68%</div><div class="td" style="left:1727.0px">8.66%</div></div>
<div class="tr" style="top:908.5px"><div class="td0"><span class="tag b">本店</span></div><div class="td" style="left:172.0px">2023-05-05</div><div class="td" style="left:333.0px">66,501</div><div class="td" style="left:463.3px">31,290</div><div class="td" style="left:600.2px">4.32%</div><div class="td" style="left:737.3px">1,353</div><div class="td" style="left:867.2px">6,280</div><div class="td" style="left:997.1px">635</div><div class="td" style="left:1127.2px">2,141</div><div class="td" style="left:1257.2px">2.13</div><div class="td" style="left:1377.1px">49.15</div><div class="td" style="left:1497.0px">20.07%</div><div class="td" style="left:1616.8px">2.03%</div><div class="td" style="left:1727.0px">6.84%</div></div>
</div>
</div>
<div class="abs" style="left:1842px;top:429px;width:8px;height:106px;background:#b0c2d4;border-radius:2px"></div>
<div class="abs" style="left:22px;top:932px;width:1820px;height:1px;background:#ebeef5"></div>
</body></html>
